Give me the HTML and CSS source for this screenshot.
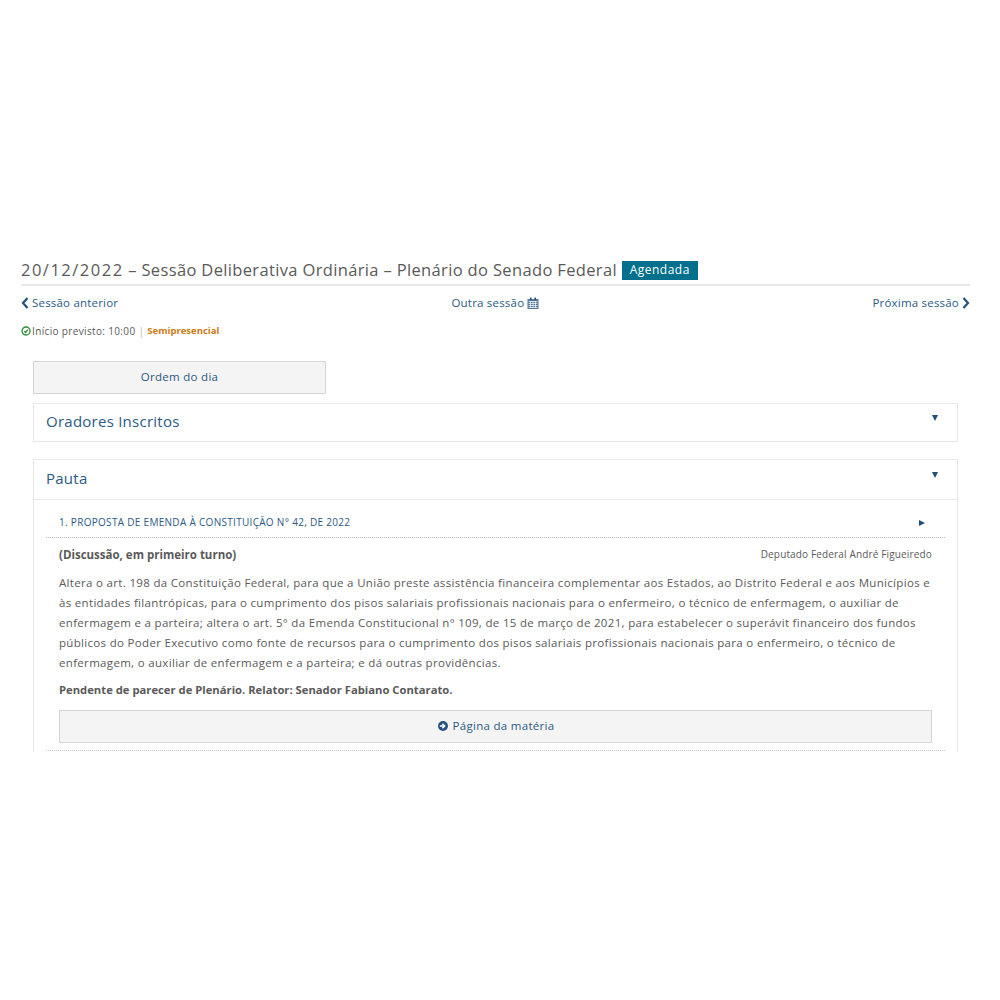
FILE: index.html
```html
<!DOCTYPE html>
<html lang="pt-BR">
<head>
  <meta charset="UTF-8" />
  <meta name="viewport" content="width=device-width, initial-scale=1.0"/>
  <title>Sessão Deliberativa Ordinária</title>
  <link rel="stylesheet" href="styles.css">
</head>
<body>
  <main class="sessao">
    <h1 class="sessao-title"><span class="data">20/12/2022</span> – Sessão Deliberativa Ordinária – Plenário do Senado Federal <span class="badge">Agendada</span></h1>
    <nav class="sessao-nav">
      <a class="nav-link">
        <svg class="chevron" viewBox="0 0 8 12"><path d="M6.500 1 2 6l4.500 5" /></svg>
        Sessão anterior
      </a>
      <a class="nav-link">
        Outra sessão
        <svg class="calendar" viewBox="0 0 12 12"><path d="M0.500 2h11v10h-11z" fill="#52789b"/><path d="M3 0.500h1.500v2.500H3zM7.500 0.500H9v2.500H7.500z" fill="#24527f"/><path d="M1.500 4.500h9M1.500 6.500h9M1.500 8.500h9M1.500 10.500h9M3.500 4v7M6 4v7M8.500 4v7" stroke="#fff" stroke-width="0.700" fill="none"/></svg>
      </a>
      <a class="nav-link">
        Próxima sessão
        <svg class="chevron" viewBox="0 0 8 12"><path d="M1.500 1 6 6l-4.500 5" /></svg>
      </a>
    </nav>
    <p class="sessao-info">
      <svg class="clock" viewBox="0 0 10 10"><circle cx="5" cy="5" r="4" /><path d="M3.200 5.100 4.600 6.500 6.900 3.700" /></svg>
      Início previsto: 10:00 <span class="sep">|</span> <strong class="tipo">Semipresencial</strong>
    </p>
    <div class="content">
      <a class="btn btn-ordem">Ordem do dia</a>
      <section class="panel">
        <header class="panel-head">
          <h2>Oradores Inscritos</h2>
          <span class="tri-down"></span>
        </header>
      </section>
      <section class="panel panel-pauta">
        <header class="panel-head panel-head-line">
          <h2>Pauta</h2>
          <span class="tri-down"></span>
        </header>
        <div class="item-head">
          <a class="item-title">1. PROPOSTA DE EMENDA À CONSTITUIÇÃO N° 42, DE 2022</a>
          <span class="tri-right"></span>
        </div>
        <div class="item-body">
          <div class="item-meta">
            <strong>(Discussão, em primeiro turno)</strong>
            <span class="autor">Deputado Federal André Figueiredo</span>
          </div>
          <p class="ementa">Altera o art. 198 da Constituição Federal, para que a União preste assistência financeira complementar aos Estados, ao Distrito Federal e aos Municípios e às entidades filantrópicas, para o cumprimento dos pisos salariais profissionais nacionais para o enfermeiro, o técnico de enfermagem, o auxiliar de enfermagem e a parteira; altera o art. 5° da Emenda Constitucional n° 109, de 15 de março de 2021, para estabelecer o superávit financeiro dos fundos públicos do Poder Executivo como fonte de recursos para o cumprimento dos pisos salariais profissionais nacionais para o enfermeiro, o técnico de enfermagem, o auxiliar de enfermagem e a parteira; e dá outras providências.</p>
          <p class="parecer">Pendente de parecer de Plenário. Relator: Senador Fabiano Contarato.</p>
          <a class="btn btn-materia">
            <svg class="arrow-circle" viewBox="0 0 12 12"><circle cx="6" cy="6" r="5" fill="#24527f"/><path d="M2.800 6h4.400M5.400 3.700 7.700 6 5.400 8.300" fill="none" stroke="#fff" stroke-width="1.500"/></svg>
            Página da matéria
          </a>
        </div>
        <div class="item-end"></div>
      </section>
    </div>
  </main>
</body>
</html>
```

FILE: styles.css
```css
* { margin:0; padding:0; box-sizing:border-box; }
body { font-family:'Open Sans',sans-serif; background:white; color:#5a5a5a; }
.sessao { width:949px; margin-left:21px; padding-top:259px; }
.sessao-title { font-size:16.500px; font-weight:normal; line-height:22px; color:#5a5a5a; letter-spacing:0.350px; padding-bottom:3px; border-bottom:2px solid #e8e8e8; white-space:nowrap; }
.data { letter-spacing:1.500px; }
.badge { display:inline-block; background:#00708c; color:white; font-size:12px; line-height:17px; height:19px; padding:0 8px; letter-spacing:0.500px; vertical-align:2px; }
.sessao-nav { display:flex; justify-content:space-between; margin-top:8px; }
.nav-link { font-size:11.500px; line-height:17px; color:#2c5a85; letter-spacing:0.200px; display:flex; align-items:center; gap:3px; }
.chevron { width:8px; height:12px; fill:none; stroke:#24527f; stroke-width:2.200; }
.calendar { width:12px; height:12px; }
.sessao-info { font-size:10px; line-height:14px; margin-top:13px; letter-spacing:0.350px; display:flex; align-items:center; gap:2px; }
.clock { width:10px; height:10px; fill:none; stroke:#2f8a33; stroke-width:1.300; margin-right:-1px; }
.sep { color:#bbb; margin:0 1px; }
.tipo { color:#d27a12; font-size:9.500px; font-weight:bold; letter-spacing:0; }
.content { margin:23px 12px 0 12px; }
.btn { display:flex; align-items:center; justify-content:center; gap:4px; background:#f4f4f4; border:1px solid #d5d5d5; color:#2c5a85; font-size:11.500px; letter-spacing:0.300px; padding-bottom:2px; }
.btn-ordem { width:293px; height:33px; }
.panel { border:1px solid #e8e8e8; margin-top:9px; }
.panel-pauta { margin-top:17px; border-bottom:none; height:293px; }
.panel-head { display:flex; justify-content:space-between; height:37px; padding:7px 19px 0 12px; }
.panel-head-line { height:40px; padding-top:8px; border-bottom:1px solid #e8e8e8; }
.panel-head h2 { font-size:15px; font-weight:normal; line-height:20px; color:#2c5a85; letter-spacing:0.250px; }
.tri-down { width:0; height:0; margin-top:4px; border-left:3.500px solid transparent; border-right:3.500px solid transparent; border-top:6px solid #1f4e7c; }
.tri-right { width:0; height:0; margin-top:6px; border-top:3.500px solid transparent; border-bottom:3.500px solid transparent; border-left:6px solid #1f4e7c; }
.item-head { display:flex; justify-content:space-between; height:38px; margin:0 12px; padding:14px 20px 0 13px; border-bottom:1px dotted #bbb; }
.item-title { font-size:10px; line-height:16px; color:#2c5a85; letter-spacing:0.300px; }
.item-body { margin:0 25px; }
.item-meta { display:flex; justify-content:space-between; align-items:center; margin-top:8px; line-height:17px; font-size:11.500px; }
.autor { font-size:10px; letter-spacing:0.150px; }
.ementa { font-size:11.500px; line-height:20px; letter-spacing:0.320px; margin-top:10px; }
.parecer { font-size:11.250px; font-weight:bold; line-height:17px; margin-top:8px; }
.btn-materia { height:33px; margin-top:12px; }
.arrow-circle { width:12px; height:12px; }
.item-end { margin:7px 12px 0; border-bottom:1px dotted #ccc; }
```
